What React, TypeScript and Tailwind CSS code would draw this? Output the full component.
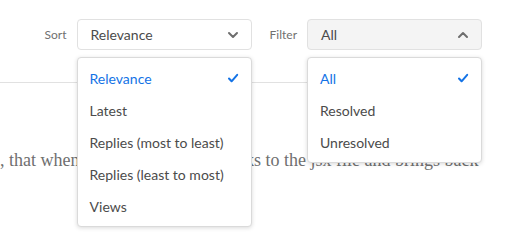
import { useState } from 'react';

const SORT_OPTIONS = ['Relevance', 'Latest', 'Replies (most to least)', 'Replies (least to most)', 'Views'];
const FILTER_OPTIONS = ['All', 'Resolved', 'Unresolved'];

function Chevron({ up }: { up?: boolean }) {
  return (
    <svg className="w-[12px] h-[12px] text-[#6e6e6e]" viewBox="0 0 12 12" fill="none" stroke="currentColor" strokeWidth={2} strokeLinecap="round" strokeLinejoin="round">
      {up ? <path d="M2 8l4-4 4 4" /> : <path d="M2 4l4 4 4-4" />}
    </svg>
  );
}

function Check() {
  return (
    <svg className="w-[12px] h-[12px] text-[#1473e6]" viewBox="0 0 12 12" fill="none" stroke="currentColor" strokeWidth={2} strokeLinecap="round" strokeLinejoin="round">
      <path d="M2 6.5l2.6 2.8L10.2 2.8" />
    </svg>
  );
}

interface PickerProps {
  label: string;
  options: string[];
  value: string;
  open: boolean;
  pressed: boolean;
  onToggle: () => void;
  onPick: (v: string) => void;
}

function Picker({ label, options, value, open, pressed, onToggle, onPick }: PickerProps) {
  return (
    <div className="flex items-center gap-[10px]">
      <span className="text-[12px] text-[#707070]">{label}</span>
      <div className="relative">
        <button
          onClick={onToggle}
          className={`w-[175px] h-[31px] flex items-center justify-between pl-[13px] pr-[12px] rounded-[4px] border border-[#e1e1e1] text-[14px] text-[#4b4b4b] ${pressed ? 'bg-[#f4f4f4]' : 'bg-white'}`}
        >
          <span>{value}</span>
          <Chevron up={pressed} />
        </button>
        {open && (
          <div className="absolute left-0 top-full mt-[7px] w-[175px] py-[4px] bg-white rounded-[4px] border border-[#dadada] shadow-[0_1px_4px_rgba(0,0,0,0.15)] z-10">
            {options.map((opt) => (
              <div
                key={opt}
                onClick={() => onPick(opt)}
                className={`h-[32px] flex items-center justify-between pl-[12px] pr-[12px] text-[14px] cursor-pointer ${opt === value ? 'text-[#1473e6]' : 'text-[#4b4b4b]'}`}
              >
                <span>{opt}</span>
                {opt === value && <Check />}
              </div>
            ))}
          </div>
        )}
      </div>
    </div>
  );
}

export default function App() {
  const [sort, setSort] = useState('Relevance');
  const [filter, setFilter] = useState('All');
  const [sortOpen, setSortOpen] = useState(true);
  const [filterOpen, setFilterOpen] = useState(true);

  return (
    <div className="w-[506px] h-[240px] bg-white overflow-hidden font-['Lato',sans-serif]">
      <div className="flex justify-end gap-[18px] pt-[19px] pr-[24px]">
        <Picker
          label="Sort"
          options={SORT_OPTIONS}
          value={sort}
          open={sortOpen}
          pressed={false}
          onToggle={() => setSortOpen(!sortOpen)}
          onPick={(v) => { setSort(v); setSortOpen(false); }}
        />
        <Picker
          label="Filter"
          options={FILTER_OPTIONS}
          value={filter}
          open={filterOpen}
          pressed={filterOpen}
          onToggle={() => setFilterOpen(!filterOpen)}
          onPick={(v) => { setFilter(v); setFilterOpen(false); }}
        />
      </div>
      <div className="mt-[32px] w-[482px] border-t border-[#e1e1e1]" />
      <p className="mt-[65px] whitespace-nowrap font-['Liberation_Serif',serif] text-[18px] text-[#6f6f6f] leading-[24px]">
        , that when clicked, this button links to the jsx file and brings back
      </p>
    </div>
  );
}
